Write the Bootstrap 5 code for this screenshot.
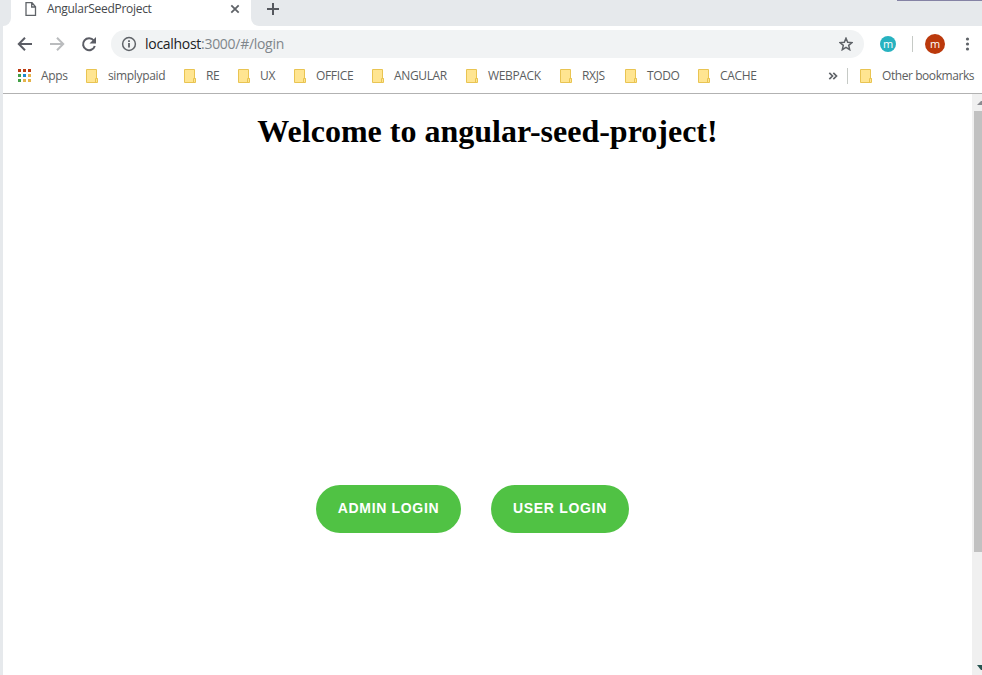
<!DOCTYPE html>
<html lang="en">
<head>
<meta charset="utf-8">
<meta name="viewport" content="width=device-width, initial-scale=1">
<title>AngularSeedProject</title>
<link href="https://cdn.jsdelivr.net/npm/bootstrap@5.3.0/dist/css/bootstrap.min.css" rel="stylesheet">
<style>
  body { font-family: "Open Sans", sans-serif; font-size: 12px; line-height: 16px; color: #5f6368; }
  .browser { width: 982px; height: 675px; border-left: 3px solid #e6e9ec; }
  svg { display: block; flex: none; }
  .tab-strip { height: 26px; background: #e6e9ec; }
  .tab-lead { width: 8px; background: #e6e9ec; border-bottom-right-radius: 8px; }
  .tab-active { width: 240px; padding: 0 11px 8px 14px; }
  .tab-title { letter-spacing: -.3px; color: #45484c; margin-left: 10px; }
  .tab-rest { background: #e6e9ec; border-bottom-left-radius: 8px; padding-left: 16px; }
  .tab-rest .new-tab { margin-top: 3px; }
  .window-edge { width: 85px; background: #e6e9ec; border-top: 1px solid #8583a5; }
  .toolbar { height: 36px; padding: 0 6px 0 14px; }
  .address { width: 753px; height: 28px; background: #f1f3f4; padding: 0 11px 0 10px; margin-left: 14px; font-size: 14px; letter-spacing: -.29px; }
  .address-text { margin-left: 8px; color: #80868b; }
  .address-text b { color: #202124; font-weight: 400; }
  .avatar { color: #fff; font-size: 11px; line-height: 1; padding-bottom: 1px; }
  .avatar-sm { width: 16px; height: 16px; background: #27b2c0; margin-left: 16px; }
  .avatar-lg { width: 20px; height: 20px; background: #bb390c; margin-left: 12px; }
  .rule { width: 1px; height: 16px; background: #c6cac6; }
  .bookmarks { height: 32px; border-bottom: 1px solid #b2b2b2; padding: 0 0 4px 15px; box-sizing: border-box; letter-spacing: -.35px; color: #5c5e60; }
  .bookmark { gap: 10px; white-space: nowrap; flex: none; }
  .w-apps { width: 68px; } .w-simply { width: 98px; } .w-re { width: 54px; } .w-ux { width: 56px; }
  .w-office { width: 78px; } .w-long { width: 94px; } .w-rxjs { width: 65px; } .w-todo { width: 73px; } .w-cache { width: 130px; }
  .other { letter-spacing: -.43px; }
  .page-title { font: 700 32px/37px "Liberation Serif", serif; color: #000; margin: 19px 0 0; width: 969px; text-align: center; }
  .login-row { margin-top: 335px; padding-left: 313px; gap: 30px; }
  .btn-login { --bs-btn-color: #fff; --bs-btn-bg: #50c244; --bs-btn-hover-bg: #46ad3b; --bs-btn-hover-color: #fff; height: 48px; border: 0; padding: 0 0 2px; font: 700 14px/16px "Liberation Sans", sans-serif; letter-spacing: .68px; }
  .btn-admin { width: 145px; } .btn-user { width: 138px; }
  .scroll-track { width: 10px; background: #f0f0f0; overflow: hidden; }
  .scroll-thumb { width: 8px; height: 441px; margin-left: 2px; background: #c1c1c1; }
</style>
<script src="https://cdn.jsdelivr.net/npm/bootstrap@5.3.0/dist/js/bootstrap.bundle.min.js"></script>
</head>
<body class="overflow-hidden bg-white">
<svg width="0" height="0" class="d-none">
  <symbol id="folder" viewBox="0 0 12 14"><path d="M.5.5h10v9h1v4H.5z" fill="#ffe591" stroke="#e9c452"/><path d="M9.500 13.500v-4h2" fill="none" stroke="#e9c452"/></symbol>
</svg>
<div class="browser d-flex flex-column bg-white">
  <div class="tab-strip d-flex">
    <div class="bg-white d-flex flex-fill">
      <div class="tab-lead"></div>
      <div class="tab-active d-flex align-items-center">
        <svg width="12" height="14" viewBox="0 0 12 14" fill="none" stroke="#5f6368" stroke-width="1.3"><path d="M1 .7h6l3.500 4v8.600H1zM6.700.7v4.300h3.800"/></svg>
        <span class="tab-title">AngularSeedProject</span>
        <svg class="ms-auto" width="10" height="10" viewBox="0 0 10 10" stroke="#5f6368" stroke-width="1.800"><path d="M1.300 1.300l7.400 7.400M8.700 1.300L1.300 8.700"/></svg>
      </div>
      <div class="tab-rest d-flex flex-fill align-items-start">
        <svg class="new-tab" width="12" height="12" viewBox="0 0 12 12" stroke="#55585e" stroke-width="2"><path d="M0 6h12M6 0v12"/></svg>
      </div>
      <div class="window-edge"></div>
    </div>
  </div>
  <div class="toolbar d-flex align-items-center">
    <svg width="16" height="14" viewBox="0 0 16 14" fill="none" stroke="#5b5d65" stroke-width="2"><path d="M15 7H2M8 .8L1.800 7 8 13.200"/></svg>
    <svg class="ms-3" width="16" height="14" viewBox="0 0 16 14" fill="none" stroke="#babcbe" stroke-width="2"><path d="M1 7h13M8 .8L14.200 7 8 13.200"/></svg>
    <svg class="ms-3" width="16" height="16" viewBox="0 0 16 16"><path d="M12.800 4.500A6 6 0 1 0 13.800 10" fill="none" stroke="#5b5d65" stroke-width="2"/><path d="M15 1v6.500H8.500z" fill="#5b5d65"/></svg>
    <div class="address rounded-pill d-flex align-items-center">
      <svg width="16" height="16" viewBox="0 0 16 16"><circle cx="8" cy="8" r="6.400" fill="none" stroke="#5f6368" stroke-width="1.500"/><path d="M7.100 7h1.800v4.500H7.100zM7.100 4.200h1.800v1.700H7.100z" fill="#5f6368"/></svg>
      <span class="address-text"><b>localhost</b>:3000/#/login</span>
      <svg class="ms-auto" width="14" height="14" viewBox="0 0 14 14" fill="none" stroke="#5f6368" stroke-width="1.500"><path d="M7 1.200l1.700 4 4.300.4-3.300 2.800 1 4.300L7 10.400l-3.700 2.300 1-4.300L1 5.600l4.300-.4z"/></svg>
    </div>
    <span class="avatar avatar-sm rounded-circle d-flex align-items-center justify-content-center">m</span>
    <span class="rule ms-3"></span>
    <span class="avatar avatar-lg rounded-circle d-flex align-items-center justify-content-center">m</span>
    <svg class="ms-auto" width="17" height="14" viewBox="0 0 17 14" fill="#5f6368"><circle cx="8.500" cy="2" r="1.600"/><circle cx="8.500" cy="7" r="1.600"/><circle cx="8.500" cy="12" r="1.600"/></svg>
  </div>
  <div class="bookmarks d-flex align-items-center">
    <div class="bookmark w-apps d-flex align-items-center">
      <svg width="13" height="13" viewBox="0 0 13 13" shape-rendering="crispEdges"><path d="M0 0h3v3H0zM5 0h3v3H5zM10 0h3v3h-3z" fill="#bd3c12"/><path d="M0 5h3v3H0zM0 10h3v3H0z" fill="#43a047"/><path d="M5 5h3v3H5z" fill="#1e88cf"/><path d="M10 5h3v3h-3zM5 10h3v3H5zM10 10h3v3h-3z" fill="#e5b34b"/></svg>Apps
    </div>
    <div class="bookmark w-simply d-flex align-items-center"><svg width="12" height="14"><use href="#folder"/></svg>simplypaid</div>
    <div class="bookmark w-re d-flex align-items-center"><svg width="12" height="14"><use href="#folder"/></svg>RE</div>
    <div class="bookmark w-ux d-flex align-items-center"><svg width="12" height="14"><use href="#folder"/></svg>UX</div>
    <div class="bookmark w-office d-flex align-items-center"><svg width="12" height="14"><use href="#folder"/></svg>OFFICE</div>
    <div class="bookmark w-long d-flex align-items-center"><svg width="12" height="14"><use href="#folder"/></svg>ANGULAR</div>
    <div class="bookmark w-long d-flex align-items-center"><svg width="12" height="14"><use href="#folder"/></svg>WEBPACK</div>
    <div class="bookmark w-rxjs d-flex align-items-center"><svg width="12" height="14"><use href="#folder"/></svg>RXJS</div>
    <div class="bookmark w-todo d-flex align-items-center"><svg width="12" height="14"><use href="#folder"/></svg>TODO</div>
    <div class="bookmark w-cache d-flex align-items-center"><svg width="12" height="14"><use href="#folder"/></svg>CACHE</div>
    <svg width="19" height="8" viewBox="0 0 19 8" fill="none" stroke="#5f6368" stroke-width="1.700"><path d="M1.300.8L4.500 4 1.300 7.200M5.300.8L8.500 4 5.300 7.200"/></svg>
    <span class="rule"></span>
    <div class="bookmark other d-flex align-items-center ms-2 ps-1"><svg width="12" height="14"><use href="#folder"/></svg>Other bookmarks</div>
  </div>
  <div class="d-flex flex-fill">
    <main class="flex-fill">
      <h1 class="page-title">Welcome to angular-seed-project!</h1>
      <div class="login-row d-flex">
        <button type="button" class="btn btn-login btn-admin rounded-pill">ADMIN LOGIN</button>
        <button type="button" class="btn btn-login btn-user rounded-pill">USER LOGIN</button>
      </div>
    </main>
    <div class="scroll-track d-flex flex-column justify-content-between">
      <div>
        <svg width="10" height="17" viewBox="0 0 10 17"><path d="M5 11l4-4h2v4z" fill="#8c8c91"/></svg>
        <div class="scroll-thumb"></div>
      </div>
      <svg width="10" height="17" viewBox="0 0 10 17"><path d="M5 7h6v5H9z" fill="#275551"/></svg>
    </div>
  </div>
</div>
</body>
</html>
